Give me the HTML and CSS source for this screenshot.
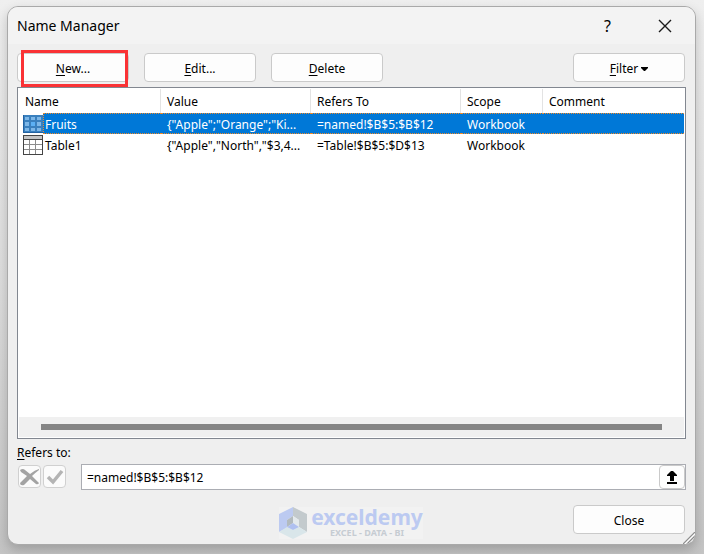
FILE: index.html
```html
<!DOCTYPE html>
<html lang="en">
<head>
    <meta charset="UTF-8">
    <meta name="viewport" content="width=device-width, initial-scale=1.0">
    <title>Name Manager</title>
    <link rel="stylesheet" href="styles.css">
</head>
<body>
    <main class="dialog">
        <!-- Title bar -->
        <header class="title-bar">
            <h1>Name Manager</h1>
            <button class="title-button" aria-label="Help">?</button>
            <button class="title-button" aria-label="Close window">
                <svg width="14" height="14" viewBox="0 0 14 14">
                    <path d="M1 1L13 13M13 1L1 13" fill="none" stroke="#1a1a1a" stroke-width="1.4"/>
                </svg>
            </button>
        </header>

        <div class="dialog-body">
            <!-- Toolbar -->
            <div class="toolbar">
                <div class="highlighted">
                    <button class="button"><u>N</u>ew...</button>
                </div>
                <button class="button"><u>E</u>dit...</button>
                <button class="button"><u>D</u>elete</button>
                <button class="button filter">
                    <span><u>F</u>ilter</span>
                    <svg width="7" height="4" viewBox="0 0 7 4"><path d="M0 0H7V1L4 4H3L0 1Z"/></svg>
                </button>
            </div>

            <!-- Names list -->
            <section class="list">
                <table class="names">
                    <colgroup>
                        <col class="col-icon">
                        <col class="col-name">
                        <col class="col-value">
                        <col class="col-refers">
                        <col class="col-scope">
                        <col>
                    </colgroup>
                    <thead>
                        <tr>
                            <th colspan="2">Name</th>
                            <th>Value</th>
                            <th>Refers To</th>
                            <th>Scope</th>
                            <th>Comment</th>
                        </tr>
                    </thead>
                    <tbody>
                        <tr class="selected">
                            <td class="icon">
                                <svg width="20" height="18" viewBox="0 0 20 18" shape-rendering="crispEdges">
                                    <path fill="#3a80be" d="M0 0H20V18H0Z"/>
                                    <path fill="#2262a2" d="M0 0H1V18H0ZM0 17H20V18H0Z"/>
                                    <path fill="#7db7e8" d="M2 2H6V5H2ZM8 2H12V5H8ZM14 2H18V5H14ZM2 13H6V16H2ZM8 13H12V16H8ZM14 13H18V16H14ZM2 7H6V11H2ZM14 7H18V11H14Z"/>
                                    <path fill="#5cb0f4" d="M8 7H12V11H8Z"/>
                                </svg>
                            </td>
                            <td>Fruits</td>
                            <td>{"Apple";"Orange";"Ki...</td>
                            <td>=named!$B$5:$B$12</td>
                            <td>Workbook</td>
                            <td></td>
                        </tr>
                        <tr>
                            <td class="icon">
                                <svg width="20" height="20" viewBox="0 0 20 20" shape-rendering="crispEdges">
                                    <path fill="#444" d="M0 0H20V20H0Z"/>
                                    <path fill="#c4c4c4" d="M1 1H19V4H1Z"/>
                                    <path fill="#8c8c8c" d="M1 5H19V19H1Z"/>
                                    <path fill="#fff" d="M1 5H6V9H1ZM7 5H12V9H7ZM13 5H19V9H13ZM1 10H6V14H1ZM7 10H12V14H7ZM13 10H19V14H13ZM1 15H6V19H1ZM7 15H12V19H7ZM13 15H19V19H13Z"/>
                                </svg>
                            </td>
                            <td>Table1</td>
                            <td>{"Apple","North","$3,4...</td>
                            <td>=Table!$B$5:$D$13</td>
                            <td>Workbook</td>
                            <td></td>
                        </tr>
                    </tbody>
                </table>
                <div class="scroll-track">
                    <div class="scroll-thumb"></div>
                </div>
            </section>

            <!-- Refers to -->
            <label class="refers-label" for="refers"><u>R</u>efers to:</label>
            <div class="refers-row">
                <div class="refers-actions">
                    <button class="small-button" aria-label="Cancel" disabled>
                        <svg width="20" height="18" viewBox="0 0 20 18">
                            <path fill="#a3a3a3" d="M0 2Q3 0 5 2L10 6Q15 2 19 1V2Q15 5 12 8L19 15Q18 17 16 16L10 11L4 17Q0 18 0 15L7 8L1 4Z"/>
                        </svg>
                    </button>
                    <button class="small-button" aria-label="Accept" disabled>
                        <svg width="18" height="16" viewBox="0 0 18 16">
                            <path fill="none" stroke="#b4b4b4" stroke-width="3.5" d="M2 8L7 13L16 2"/>
                        </svg>
                    </button>
                </div>
                <div class="refers-field">
                    <input id="refers" type="text" value="=named!$B$5:$B$12">
                    <button class="collapse-button" aria-label="Collapse dialog">
                        <svg width="10" height="13" viewBox="0 0 10 13">
                            <path d="M4 0H6L10 4V5H7V10H3V5H0V4ZM0 11H10V13H0Z"/>
                        </svg>
                    </button>
                </div>
            </div>

            <!-- Footer -->
            <footer class="footer">
                <div class="brand">
                    <svg width="28" height="32" viewBox="0 0 28 32">
                        <path fill="#bccaf1" d="M14 0V9L8 13V21L0 25V7Z"/>
                        <path fill="#c3cacd" d="M14 0L28 7V25L20 20V13L14 9Z"/>
                        <path fill="#d9e6ea" d="M0 25L8 20L14 23L20 20L28 25L14 32Z"/>
                        <path fill="#b2babe" d="M8 13L14 9V16L8 20Z"/>
                        <path fill="#e3e9ec" d="M14 9L20 13V20L14 16Z"/>
                        <path fill="#afc0f0" d="M8 20L14 16L20 20L14 23Z"/>
                    </svg>
                    <div class="brand-text">
                        <span class="brand-name">exceldemy</span>
                        <span class="brand-tag">EXCEL - DATA - BI</span>
                    </div>
                </div>
                <button class="button">Close</button>
            </footer>
        </div>

        <svg class="grip" width="12" height="12" viewBox="0 0 12 12">
            <path d="M0 12L12 0M4 12L12 4" fill="none" stroke="#8c8c8c" stroke-width="1.2"/>
            <path d="M2 12L12 2M6 12L12 6" fill="none" stroke="#fff"/>
        </svg>
    </main>
</body>
</html>
```
FILE: styles.css
```css
/* General styles */
* {
    box-sizing: border-box;
}

body {
    display: flex;
    min-height: 100vh;
    margin: 0;
    padding: 6px 8px 9px 7px;
    background: linear-gradient(#efefef, #dedede 50%, #c4c4c4);
    font-family: "Noto Sans", "Open Sans", sans-serif;
    font-size: 12px;
    line-height: 20px;
    color: #000;
}

button,
input {
    font: inherit;
    color: inherit;
}

button {
    display: flex;
    align-items: center;
    justify-content: center;
    padding: 0;
}

u {
    text-underline-offset: 2px;
}

/* Dialog */
.dialog {
    position: relative;
    display: flex;
    flex: 1;
    flex-direction: column;
    min-width: 0;
    overflow: hidden;
    border: 1px solid #a9a9a9;
    border-radius: 11px;
    background: #efefef;
    box-shadow: 0 5px 12px rgba(0, 0, 0, 0.2);
}

.title-bar {
    display: flex;
    align-items: center;
    height: 37px;
    padding: 0 2px 0 9px;
    background: #f3f3f3;
}

.title-bar h1 {
    flex: 1;
    margin: 0;
    font-size: 14px;
    font-weight: 400;
}

.title-button {
    width: 57px;
    height: 36px;
    border: 0;
    background: none;
    font-size: 16px;
}

.dialog-body {
    display: flex;
    flex: 1;
    flex-direction: column;
    padding: 9px;
}

/* Toolbar */
.toolbar {
    display: flex;
    gap: 15px;
    margin-bottom: 5px;
    padding-right: 1px;
}

.button {
    width: 112px;
    height: 29px;
    padding-top: 2px;
    border: 1px solid #cacaca;
    border-radius: 4px;
    background: #fdfdfd;
}

.filter {
    gap: 3px;
    margin-left: auto;
}

.highlighted {
    position: relative;
}

.highlighted::after {
    content: "";
    position: absolute;
    inset: -3px 1px -5px 4px;
    border: 3px solid #fa3235;
    z-index: 1;
}

/* Names list */
.list {
    display: flex;
    flex: 1;
    flex-direction: column;
    padding: 1px;
    border: 1px solid #828790;
    background: #fff;
}

.names {
    width: 100%;
    table-layout: fixed;
    border-collapse: separate;
    border-spacing: 0;
}

.col-icon {
    width: 24px;
}

.col-name {
    width: 118px;
}

.col-value,
.col-refers {
    width: 150px;
}

.col-scope {
    width: 82px;
}

.names th {
    height: 24px;
    padding: 2px 6px 0;
    border-right: 1px solid #e3e3e3;
    font-weight: 400;
    text-align: left;
}

.names th:last-child {
    border-right: 0;
}

.names td {
    height: 21px;
    padding: 2px 6px 0;
    line-height: 18px;
    white-space: nowrap;
}

.names .icon {
    padding: 0 0 0 4px;
}

.icon svg {
    display: block;
}

.names .icon + td {
    padding-left: 2px;
}

.selected td:not(.icon) {
    border: 1px dotted #f08a28;
    border-width: 1px 0;
    background: #0078d7;
    color: #fff;
    line-height: 17px;
}

.selected .icon + td:not(.icon) {
    border-left-width: 1px;
    padding-left: 1px;
}

.scroll-track {
    margin-top: auto;
    padding: 7px 22px;
    background: #f0f0f0;
}

.scroll-thumb {
    height: 6px;
    background: #858585;
}

/* Refers to */
.refers-label {
    margin: 4px 0 1px;
}

.refers-row {
    display: flex;
    gap: 15px;
}

.refers-actions {
    display: flex;
    gap: 2px;
    padding: 1px 0 0 1px;
}

.small-button {
    width: 23px;
    height: 23px;
    border: 1px solid #d0d0d0;
    border-radius: 4px;
    background: #fbfbfb;
}

.refers-field {
    display: flex;
    flex: 1;
    height: 26px;
    border: 1px solid #abadb3;
    background: #fff;
}

.refers-field input {
    flex: 1;
    min-width: 0;
    padding: 2px 5px 0;
    border: 0;
    outline: 0;
    background: none;
}

.collapse-button {
    width: 26px;
    border: 1px solid #cacaca;
    border-radius: 4px;
    background: #fdfdfd;
}

/* Footer */
.footer {
    display: grid;
    grid-template-columns: 1fr auto 1fr;
    align-items: start;
    margin-top: 15px;
    padding-right: 1px;
}

.footer .button {
    justify-self: end;
}

.brand {
    display: flex;
    grid-column: 2;
    gap: 4px;
    height: 32px;
    margin-top: 2px;
    margin-bottom: -4px;
    background: #f2f2f2;
}

.brand-text {
    display: flex;
    flex-direction: column;
    align-items: center;
    font-weight: 700;
}

.brand-name {
    color: #bccaf1;
    font-size: 21px;
    line-height: 21px;
}

.brand-tag {
    color: #c6ccd2;
    font-size: 9px;
    line-height: 10px;
}

/* Resize grip */
.grip {
    position: absolute;
    right: 0;
    bottom: 0;
}
```
